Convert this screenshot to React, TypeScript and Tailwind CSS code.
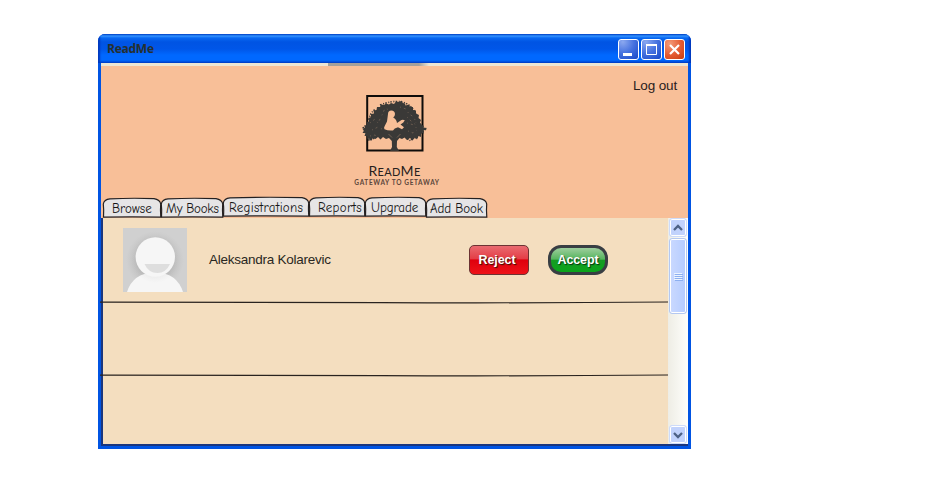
import React from "react";

const tabs = [
  { label: "Browse", box: "w-[58px] mt-px pl-[9px]", text: "tracking-[0.05px]", w: 58 },
  { label: "My Books", box: "w-[62px] mt-px pl-[5px]", text: "tracking-[-0.25px]", w: 62 },
  { label: "Registrations", box: "w-[86px] pl-[6px]", text: "tracking-[0.25px]", w: 86 },
  { label: "Reports", box: "w-[56px] pl-[9px]", text: "tracking-[0.25px]", w: 56 },
  { label: "Upgrade", box: "w-[61px] pl-[6px]", text: "tracking-[-0.1px]", w: 61 },
  { label: "Add Book", box: "w-[61px] mt-px pl-[4px]", text: "tracking-[-0.1px]", w: 61 },
];

function Tab({ label, box, text, w }: (typeof tabs)[number]) {
  return (
    <button className={"relative h-[20px] shrink-0 text-left " + box}>
      <svg className="absolute left-0 top-0 overflow-visible" width={w} height="20">
        <path
          d={`M.5 19.2 Q1 12 .3 6 Q1 1.3 7 .8 Q${w / 2} -.2 ${w - 7} .6 Q${w - 1} 1.6 ${w - 0.3} 6 Q${w - 0.8} 12 ${w - 0.2} 19.2 Q${w / 2} 18.6 .5 19.2Z`}
          fill="#e6e5e6"
          stroke="#242021"
          strokeWidth="1.2"
        />
      </svg>
      <span className={"relative block whitespace-nowrap pt-px font-['Comic_Sans_MS','Comic_Neue','Open_Sans',sans-serif] text-[13px] leading-[20px] text-[#161616] " + text}>
        {label}
      </span>
    </button>
  );
}

function Logo() {
  return (
    <svg className="-ml-[2px]" width="70" height="60" viewBox="360 93 70 60">
      <rect x="367.2" y="96" width="55.3" height="54.5" fill="none" stroke="#0f0c0a" strokeWidth="2" />
      <path
        fill="#3a3937"
        d="M362.5 129L365 127.5 364 125.5 367 125 366.5 122 369 121.5 368.5 118 371 117 371 114 374 113.5 373.5 110.5 376.5 110 377 107 380 107 381 104.5 384 105 386 103.5 389 104.5 391 103 394 104 396 101.5 399 102 401 101 403 103 405 103.5 405.5 105.5 409 104.5 410 107 413 107 413 110 416 110.5 416 113.5 419 115 418.5 118 421 120 420 122.5 422 125 424 126 423 127.5 427 128 425 130 423 130.5 424 133.5 421 133 421 137 418.5 136 417 139.5 415 137.5 412.5 140.5 410 138 407 140 404.5 137.5 402 139 399.5 138 397 141 396.8 147 399 151H390L392 147 391.8 141 389 138 386 139 383 137 380.5 139.5 378 137 375.5 139 373 138 371 141 369 138.5 367.5 139.5 367 136 364.5 136 365.5 133 362.5 133 364 130.5Z"
      />
      <path
        fill="none"
        stroke="#3a3937"
        strokeWidth="1.6"
        strokeDasharray="1.5 1.6 1 1.2"
        d="M363 127l3 7 2-1 1 7 4-1 3-2 M369 120q1-8 7-11 M380 105q13-5 23-3q10 4 13 13 M426 129l-5 4-2-1-2 6-4-1-2 4-5-3"
      />
      <path
        fill="none"
        stroke="#f8bf98"
        strokeWidth=".5"
        opacity=".5"
        strokeDasharray="1 3 2 4"
        d="M370 123l5-4 3 4 5-10 2-5 4 2 M372 130l6-3 4 2 M400 107l6 2 3 5 5 3 2 6 M407 123l7 2 4 5 M408 131l5 2 4-3 M370 136l5-1 4 3 M407 117l4 4 5 4"
      />
      <path
        fill="#f8bf98"
        d="M388 114Q388 110.4 391.3 110.4Q394.8 110.5 395 114Q395 116.2 393.2 117.5Q396.5 119 397 123L400 121Q402.5 118.8 404.8 120.3L403.3 122.5 400.5 124.5 404 127.3 402 129.2 398 127.3 394.8 128.5 393 130.5Q388 131 384.5 129.3Q383.5 127.8 384.7 126L387 121.5Z"
      />
      <path d="M388.5 134l3.5 3.5M400.5 134l-3.5 3.5" fill="none" stroke="#f8bf98" strokeWidth=".5" opacity=".6" />
    </svg>
  );
}

function Caption({ kind }: { kind: "min" | "max" | "close" }) {
  const color =
    kind === "close"
      ? "bg-[radial-gradient(circle_at_25%_20%,#f39a78,#e45a31_55%,#c63c10)]"
      : "bg-[radial-gradient(circle_at_20%_10%,#8ba8ef,#4571df_50%,#1748c8)]";
  return (
    <button className={"flex size-[21px] items-center justify-center rounded-[3px] border border-white " + color}>
      <svg width="19" height="19" fill="none" stroke="white">
        {kind === "min" && <path d="M4 14.5h9" strokeWidth="3" />}
        {kind === "max" && <path d="M4.5 5v9.5h10V5" />}
        {kind === "max" && <path d="M4 5h11" strokeWidth="2" />}
        {kind === "close" && <path d="M5 5l9 9M14 5l-9 9" strokeWidth="2.2" />}
      </svg>
    </button>
  );
}

function ScrollArrow({ down = false }: { down?: boolean }) {
  return (
    <div className="flex h-[19px] w-[18px] shrink-0 items-center justify-center rounded-[3px] border border-[#cddbfa] bg-[#c1d2fc] shadow-[inset_0_0_0_1px_white]">
      <svg width="10" height="8" fill="none" stroke="#4d6185" strokeWidth="2.3">
        <path d={down ? "M1 2l4 4 4-4" : "M1 6l4-4 4 4"} />
      </svg>
    </div>
  );
}

function Avatar() {
  return (
    <svg className="shrink-0" width="64" height="64">
      <defs>
        <radialGradient id="shade">
          <stop offset=".65" stopColor="#aaa" stopOpacity=".5" />
          <stop offset="1" stopColor="#bbb" stopOpacity="0" />
        </radialGradient>
      </defs>
      <rect width="64" height="64" fill="#d0d0d0" />
      <circle cx="32" cy="32" r="29" fill="url(#shade)" />
      <path d="M4 64Q10 45 32 44Q54 45 60 64Z" fill="#f6f6f6" />
      <circle cx="32" cy="31" r="24" fill="url(#shade)" opacity=".3" />
      <circle cx="32.3" cy="29" r="19.7" fill="#f6f6f6" />
      <path d="M21.5 36h25.5q-4 9-12.7 9t-12.8-9z" fill="#dedede" />
    </svg>
  );
}

function RowLine() {
  return (
    <svg className="-ml-[2px] block h-[3px] w-[567px] shrink-0 overflow-visible" viewBox="0 0 567 3" preserveAspectRatio="none">
      <path d="M-1 1.1Q140 1 280 1.6T567 1" fill="none" stroke="#29231f" strokeWidth="1.2" />
    </svg>
  );
}

export default function App() {
  return (
    <main className="h-[497px] w-[943px] overflow-hidden bg-white pl-[98px] pt-[34px] font-['Liberation_Sans',Arial,sans-serif]">
      <section className="flex h-[415px] w-[593px] flex-col overflow-hidden rounded-t-[7px] bg-[#0054e3]">
        <header className="flex h-[29px] shrink-0 items-center justify-between bg-[linear-gradient(#075bd8_0px,#3593ff_2px,#0868f2_4px,#0054e3_8px,#0056e8_15px,#0068ff_21px,#0068ff_26px,#0046cf_29px)] pl-[9px] pr-[6px] shadow-[inset_2px_0_2px_#0038bd,inset_-2px_0_2px_#0038bd]">
          <h1 className="font-['Trebuchet_MS','Open_Sans',sans-serif] text-[12px] font-bold leading-[28px] tracking-[-0.25px] text-[#26302f]">ReadMe</h1>
          <div className="flex gap-[2px] pt-px">
            <Caption kind="min" />
            <Caption kind="max" />
            <Caption kind="close" />
          </div>
        </header>
        <div className="mx-[3px] flex h-[383px] flex-col bg-[#f8bf98]">
          <div className="h-[3px] shrink-0 bg-[#ece6d5] pl-[227px]">
            <div className="h-[3px] w-[101px] bg-[linear-gradient(90deg,#a3a09c_90%,#ece6d5)]" />
          </div>
          <div className="flex h-[131px] shrink-0">
            <div className="w-[230px]" />
            <div className="flex w-[130px] flex-col items-center pt-[27px]">
              <Logo />
              <div className="mt-[9px] -ml-[3px] font-['Lato',sans-serif] text-[14px] leading-[18px] tracking-[0.3px] text-[#27201c]">
                R<span className="text-[11px]">EAD</span>M<span className="text-[11px]">E</span>
              </div>
              <div className="-mt-[2px] ml-[2px] whitespace-nowrap font-['Lato',sans-serif] text-[6.5px] font-bold leading-[8px] tracking-[0.65px] text-[#5c463b]">GATEWAY TO GETAWAY</div>
            </div>
            <a className="ml-auto mr-[11px] mt-[11px] text-[13.5px] leading-[18px] tracking-[-0.15px] text-[#29211d]">Log out</a>
          </div>
          <nav className="flex h-[21px] w-[386px] shrink-0 items-start pl-[2px]">
            {tabs.map((tab) => <Tab key={tab.label} {...tab} />)}
          </nav>
          <div className="flex h-[228px] shrink-0 border-b-2 border-[#1a367e] bg-[#f4debf]">
            <div className="flex w-[567px] flex-col border-l-2 border-[#1a367e]">
              <div className="flex h-[83px] shrink-0 items-start pl-[20px] pt-[10px]">
                <Avatar />
                <span className="ml-[22px] mt-[22px] w-[260px] text-[13.5px] leading-[19px] tracking-[-0.25px] text-[#292722]">Aleksandra Kolarevic</span>
                <button className="mt-[17px] h-[30px] w-[60px] rounded-[5px] border border-[#6c3333] bg-[linear-gradient(#e96a70,#e43c45_47%,#df000d_49%,#ee1218)] pr-[4px] text-[12.5px] font-bold leading-[28px] tracking-[-0.1px] text-white [text-shadow:1px_1px_1px_#310]">Reject</button>
                <button className="ml-[19px] mt-[17px] h-[30px] w-[60px] rounded-[13px] border-[3px] border-[#393e43] bg-[linear-gradient(#9dce9d,#55b45d_47%,#159b23_50%,#0ba51b)] text-[12.5px] font-bold leading-[24px] tracking-[-0.15px] text-white [text-shadow:1px_1px_1px_#031]">Accept</button>
              </div>
              <RowLine />
              <div className="h-[70px] shrink-0" />
              <RowLine />
            </div>
            <div className="flex w-[20px] flex-col bg-[linear-gradient(90deg,#eeede5,#fefefb)] pl-px">
              <ScrollArrow />
              <div className="mt-px flex h-[76px] w-[18px] shrink-0 flex-col items-center justify-center gap-px rounded-[3px] border border-[#b4c8f1] bg-[linear-gradient(90deg,#cad9ff,#b5ccff)] shadow-[inset_0_0_0_1px_white]">
                {[0, 1, 2, 3].map((n) => <div key={n} className="h-px w-[8px] bg-[#edf4ff] shadow-[1px_1px_0_#8caff0]" />)}
              </div>
              <div className="mt-auto"><ScrollArrow down /></div>
            </div>
          </div>
        </div>
      </section>
    </main>
  );
}
